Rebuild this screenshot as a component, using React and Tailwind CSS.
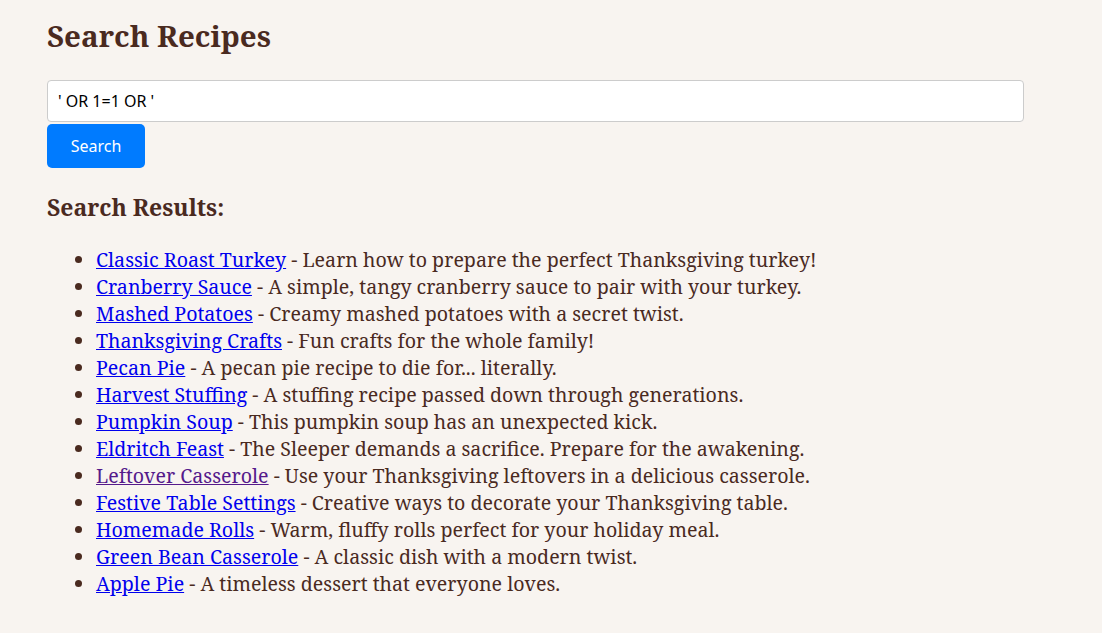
import React from "react";

const items = [
  ["Classic Roast Turkey", "Learn how to prepare the perfect Thanksgiving turkey!"],
  ["Cranberry Sauce", "A simple, tangy cranberry sauce to pair with your turkey."],
  ["Mashed Potatoes", "Creamy mashed potatoes with a secret twist."],
  ["Thanksgiving Crafts", "Fun crafts for the whole family!"],
  ["Pecan Pie", "A pecan pie recipe to die for... literally."],
  ["Harvest Stuffing", "A stuffing recipe passed down through generations."],
  ["Pumpkin Soup", "This pumpkin soup has an unexpected kick."],
  ["Eldritch Feast", "The Sleeper demands a sacrifice. Prepare for the awakening."],
  ["Leftover Casserole", "Use your Thanksgiving leftovers in a delicious casserole.", true],
  ["Festive Table Settings", "Creative ways to decorate your Thanksgiving table."],
  ["Homemade Rolls", "Warm, fluffy rolls perfect for your holiday meal."],
  ["Green Bean Casserole", "A classic dish with a modern twist."],
  ["Apple Pie", "A timeless dessert that everyone loves."],
];

export default function App() {
  return (
    <div className="min-h-[633px] bg-[#f8f4f0] text-[#4a2a1f] pl-[47px] pt-[14px]" style={{ fontFamily: '"Noto Serif", "DejaVu Serif", serif' }}>
      <h1 className="text-[29.5px] font-bold leading-[44px] m-0">Search Recipes</h1>
      <div className="mt-[22px] w-[977px]">
        <input
          readOnly
          value="' OR 1=1 OR '"
          className="w-full h-[42px] px-[10px] bg-white border border-[#ccc] rounded-[4px] text-[16px] text-black outline-none"
          style={{ fontFamily: '"Noto Sans", "Open Sans", sans-serif' }}
        />
        <button
          className="mt-[2px] block w-[98px] h-[44px] bg-[#007bff] text-white rounded-[5px] text-[16px]"
          style={{ fontFamily: '"Noto Sans", "Open Sans", sans-serif' }}
        >
          Search
        </button>
      </div>
      <h2 className="mt-[22px] text-[23px] font-bold leading-[34px]">Search Results:</h2>
      <ul className="mt-[22px] pl-[49px] list-disc text-[19.6px] leading-[27px]">
        {items.map(([t, d, v]) => (
          <li key={t}>
            <a href="#" className={v ? "underline text-[#551a8b]" : "underline text-[#0000ee]"}>{t}</a> - {d}
          </li>
        ))}
      </ul>
    </div>
  );
}
